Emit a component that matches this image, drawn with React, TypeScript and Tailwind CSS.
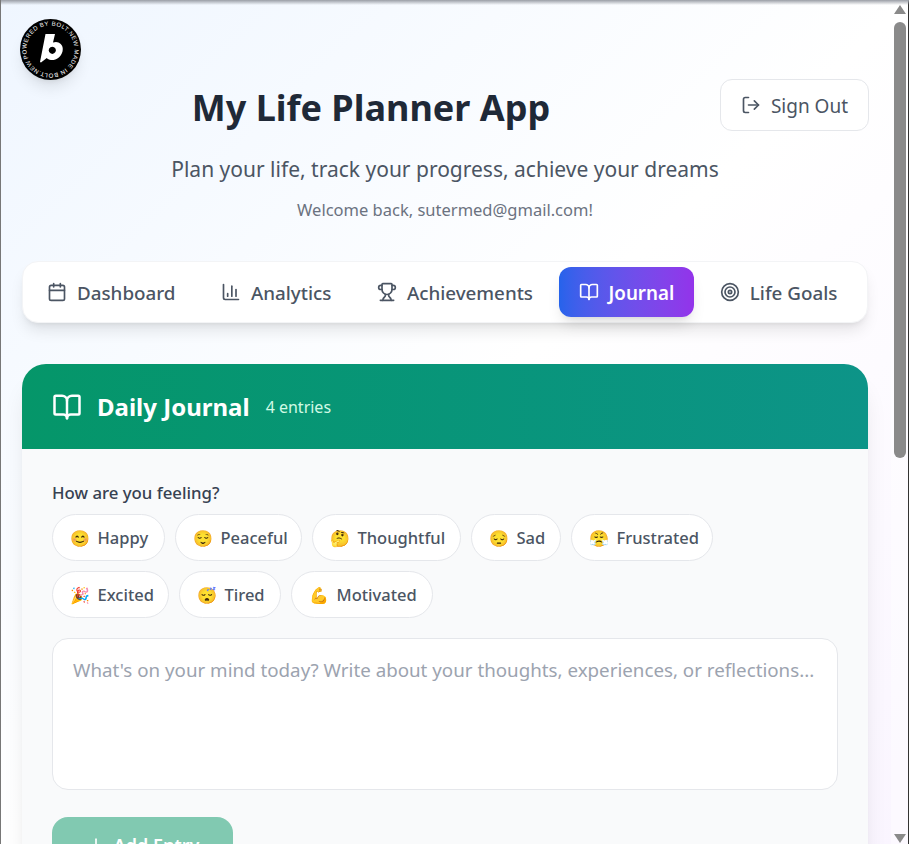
import { BookOpen, Calendar, ChartColumn, LogOut, Plus, Target, Trophy } from "lucide-react";

const tabs = [
  { label: "Dashboard", icon: Calendar },
  { label: "Analytics", icon: ChartColumn },
  { label: "Achievements", icon: Trophy },
  { label: "Journal", icon: BookOpen, active: true },
  { label: "Life Goals", icon: Target },
];

const moodRows = [
  [
    { emoji: "😊", label: "Happy", width: "w-[113px]" },
    { emoji: "😌", label: "Peaceful", width: "w-[127px]" },
    { emoji: "🤔", label: "Thoughtful", width: "w-[149px]" },
    { emoji: "😔", label: "Sad", width: "w-[90px]" },
    { emoji: "😤", label: "Frustrated", width: "w-[142px]" },
  ],
  [
    { emoji: "🎉", label: "Excited", width: "w-[117px]" },
    { emoji: "😴", label: "Tired", width: "w-[102px]" },
    { emoji: "💪", label: "Motivated", width: "w-[142px]" },
  ],
];

function BoltBadge() {
  return (
    <div className="absolute left-[19px] top-[19px] h-[61px] w-[61px] rounded-full shadow-lg">
      <svg viewBox="0 0 61 61" className="h-full w-full">
        <circle cx="30.5" cy="30.5" r="30.5" fill="#000" />
        <defs>
          <path id="badge-ring" d="M30.5 30.5 m-24 0 a24 24 0 1 1 48 0 a24 24 0 1 1 -48 0" />
        </defs>
        <g transform="rotate(-22 30.5 30.5)">
          <text fill="#fff" fontSize="6" fontFamily="Liberation Sans, sans-serif">
            <textPath href="#badge-ring" textLength="148">
              POWERED BY BOLT.NEW MADE IN BOLT.NEW
            </textPath>
          </text>
        </g>
        <path
          fill="#fff"
          fillRule="evenodd"
          d="M25.5 15 L35 15 L33 23.5 C35 22.8 37 22.8 38.5 23.5 C42 25 43.5 28.5 42.5 32.5 C41.2 38 36 41.5 31 41 C29 40.8 27.6 40 26.8 39 L21 43.5 L20 43 Z M32.3 27.7 a3.6 3.6 0 1 0 0.01 0 Z"
        />
      </svg>
    </div>
  );
}

function Scrollbar() {
  return (
    <div className="flex h-full w-[18px] shrink-0 flex-col items-center border-r border-[#333] bg-white/40">
      <div className="mt-[5px] h-0 w-0 border-x-[6px] border-b-[9px] border-x-transparent border-b-[#8a8a8a]" />
      <div className="mt-2 h-[436px] w-[12px] rounded-full bg-[#8a8a8a]" />
      <div className="mt-auto mb-[1px] h-0 w-0 border-x-[6px] border-t-[9px] border-x-transparent border-t-[#8a8a8a]" />
    </div>
  );
}

export default function App() {
  return (
    <div className="relative flex h-[844px] w-[909px] overflow-hidden border-l border-[#777] bg-gradient-to-br from-[#eff6ff] via-white to-[#faf5ff] font-['Noto_Sans',sans-serif]">
      <div className="pointer-events-none absolute inset-x-0 top-0 h-[5px] bg-gradient-to-b from-[#9a9ea6] to-transparent" />
      <BoltBadge />

      <main className="min-w-0 flex-1 pl-[21px] pr-[23px] pt-[79px]">
        <header className="flex items-start">
          <h1 className="flex-1 pt-[3px] text-center text-[36px] leading-[52px] font-bold text-[#1f2937]">
            My Life Planner App
          </h1>
          <button className="-mr-px flex h-[52px] w-[149px] items-center justify-center gap-[10px] rounded-xl border border-[#e5e7eb] bg-white/80 text-[19px] text-[#4b5563]">
            <LogOut className="h-5 w-5" />
            <span className="pt-[2px]">Sign Out</span>
          </button>
        </header>

        <p className="mt-[20px] text-center text-[21px] leading-[30px] text-[#4b5563]">
          Plan your life, track your progress, achieve your dreams
        </p>
        <p className="mt-[14px] text-center text-[16.5px] leading-[24px] text-[#6b7280]">
          Welcome back, sutermed@gmail.com!
        </p>

        <nav className="mt-[39px] flex h-[62px] items-center gap-[5.5px] rounded-2xl border border-[#f3f4f6] bg-white px-[4px] shadow-lg">
          {tabs.map(({ label, icon: Icon, active }) => (
            <button
              key={label}
              className={
                active
                  ? "flex h-[50px] items-center gap-[10px] rounded-xl bg-gradient-to-r from-[#2563eb] to-[#9333ea] px-[20px] text-[18.8px] font-semibold text-white shadow-lg"
                  : "flex h-[50px] items-center gap-[10px] rounded-xl px-[20px] text-[18.8px] font-medium text-[#4b5563]"
              }
            >
              <Icon className="h-5 w-5" />
              <span className="pt-[2px]">{label}</span>
            </button>
          ))}
        </nav>

        <section className="mt-[41px] rounded-t-3xl bg-[#f9fafb] shadow-xl">
          <div className="flex h-[85px] items-center gap-[15px] rounded-t-3xl bg-gradient-to-r from-[#059669] to-[#0d9488] px-[30px] text-white">
            <BookOpen className="h-[30px] w-[30px]" strokeWidth={2} />
            <h2 className="text-[24px] font-bold">Daily Journal</h2>
            <span className="ml-px text-[16px] text-[#d1fae5]">4 entries</span>
          </div>

          <div className="px-[30px] pt-[32px]">
            <p className="text-[16.8px] leading-[24px] font-medium text-[#374151]">How are you feeling?</p>
            <div className="mt-[9px] flex flex-col gap-[10px]">
              {moodRows.map((row) => (
                <div key={row[0].label} className="flex gap-[10px]">
                  {row.map((m) => (
                    <button
                      key={m.label}
                      className={`${m.width} flex h-[47px] items-center gap-2 whitespace-nowrap rounded-full border-[1.5px] border-[#e5e7eb] bg-white pl-[17.5px] pt-[2px] text-[16.5px] font-medium text-[#4b5563]`}
                    >
                      <span className="flex w-[19px] justify-center text-[16px] font-['Noto_Color_Emoji',sans-serif]">{m.emoji}</span>
                      {m.label}
                    </button>
                  ))}
                </div>
              ))}
            </div>

            <textarea
              readOnly
              placeholder="What's on your mind today? Write about your thoughts, experiences, or reflections..."
              className="mt-[20px] block h-[152px] w-full resize-none rounded-2xl border border-[#e5e7eb] bg-white px-5 py-[17px] text-[18.75px] placeholder:text-[#9ca3af]"
            />

            <button className="mt-[27px] flex h-[56px] w-[181px] items-center justify-center gap-2 rounded-2xl bg-[#81c9b1] text-[18px] font-semibold text-white">
              <Plus className="h-5 w-5" />
              Add Entry
            </button>
          </div>
        </section>
      </main>

      <Scrollbar />
    </div>
  );
}
